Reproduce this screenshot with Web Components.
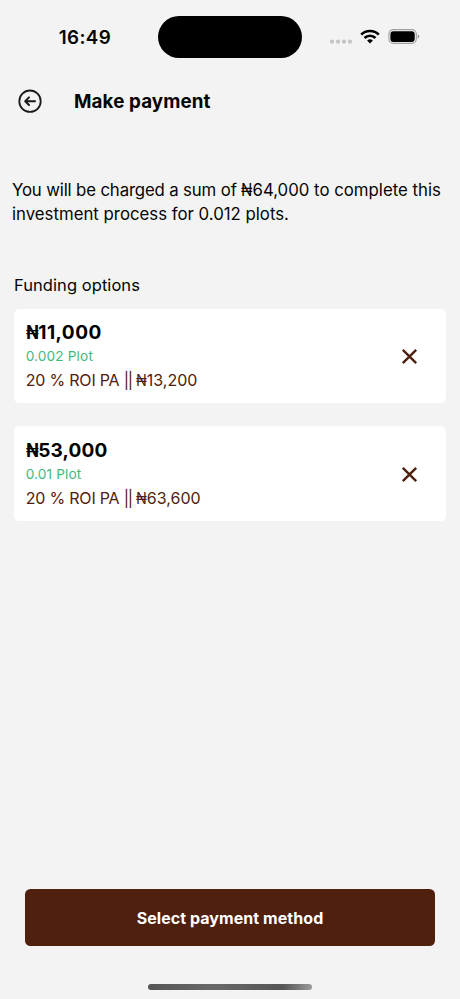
<!DOCTYPE html>
<html lang="en">
<head>
<meta charset="utf-8">
<title>Make payment</title>
<style>
html,body{margin:0;height:100%;background:#f3f3f3}
body{font-family:Inter,"Liberation Sans",sans-serif;color:#050505;overflow:hidden}
</style>
</head>
<body>
<payment-screen></payment-screen>
<script>
const define = (name, html) => customElements.define(name, class extends HTMLElement {
  constructor() {
    super();
    const t = document.createElement('template');
    t.innerHTML = html;
    this.attachShadow({mode: 'open'}).append(t.content.cloneNode(true));
  }
});

define('status-bar', `
<style>
:host{display:grid;grid-template-columns:158px 144px 1fr;height:74px;padding-top:15.5px;box-sizing:border-box;align-items:start}
.time{padding-left:58.7px;font-size:18.8px;font-weight:600;line-height:43px;letter-spacing:.4px;white-space:nowrap}
.island{height:42.3px;border-radius:22px;background:#000}
svg{display:block;width:158px;height:42px}
</style>
<div class="time">16:49</div>
<div class="island"></div>
<svg viewBox="302 15.5 158 42">
  <g fill="#c4c4c4"><circle cx="332" cy="41.2" r="2.1"/><circle cx="338" cy="41.2" r="2.1"/><circle cx="344" cy="41.2" r="2.1"/><circle cx="350" cy="41.2" r="2.1"/></g>
  <g fill="none" stroke="#000" stroke-width="2.7"><path d="M361.2 34.1a12.5 12.5 0 0 1 17.6 0"/><path d="M364.5 37.5a7.8 7.8 0 0 1 11 0"/></g>
  <path d="M367.1 40.1a4.2 4.2 0 0 1 5.8 0L370 43z"/>
  <rect x="388.9" y="29.1" width="27.4" height="13.8" rx="4.4" fill="none" stroke="#a0a0a0" stroke-width="1.1"/>
  <rect x="390.4" y="30.7" width="24.3" height="10.7" rx="3" fill="#000"/>
  <path d="M417.6 33.9q1.7.6 1.7 2.1t-1.7 2.1z" fill="#999"/>
</svg>`);

define('page-header', `
<style>
:host{display:flex;align-items:center;height:54px;padding-left:18px;gap:32px}
svg{width:24px;height:24px;flex:none}
h1{margin:1px 0 0;font-size:18.8px;font-weight:700;line-height:25px;letter-spacing:.1px;white-space:nowrap}
</style>
<svg viewBox="0 0 24 24" fill="none" stroke="#1c1c1c" stroke-width="1.8" stroke-linecap="round" stroke-linejoin="round"><circle cx="12" cy="12.2" r="10.7"/><path d="M17 12.2H7.4M11 8.4 7.2 12.2l3.8 3.8" stroke-width="2"/></svg>
<h1><slot></slot></h1>`);

define('naira-sign', `
<style>
:host{display:inline-block;transform:scaleX(.88);transform-origin:0 50%;margin-right:-.1em;letter-spacing:0}
</style><slot></slot>`);

define('funding-card', `
<style>
:host{display:flex;align-items:center;justify-content:space-between;height:94.7px;box-sizing:border-box;padding:0 28.3px 0 11.7px;border-radius:5.5px;background:#fff}
.copy{display:flex;flex-direction:column;margin-top:2.5px;white-space:nowrap}
.amount{font-size:19px;font-weight:700;color:#000;letter-spacing:.2px;line-height:26px}
.plot{font-size:13.7px;color:#45b97c;letter-spacing:.12px;line-height:20px}
.roi{font-size:16px;color:#50200f;line-height:28px}
svg{width:17px;height:17px;margin-top:1.2px;flex:none}
</style>
<div class="copy"><slot class="amount" name="amount"></slot><slot class="plot" name="plot"></slot><slot class="roi" name="roi"></slot></div>
<svg viewBox="0 0 17 17" fill="none" stroke="#50200f" stroke-width="2.4"><path d="m1.8 1.8 13.4 13.4M15.2 1.8 1.8 15.2"/></svg>`);

define('primary-button', `
<style>
:host{display:block}
button{display:block;width:100%;height:57px;padding:0;border:0;border-radius:5.5px;background:#50200f;color:#fff;font:700 16px/59px Inter,"Liberation Sans",sans-serif;letter-spacing:.06px}
</style>
<button><slot></slot></button>`);

define('payment-screen', `
<style>
:host{display:flex;flex-direction:column;width:460px;height:999px;background:#f3f3f3}
.message{margin:50px 0 0 12px;font-size:16.8px;line-height:24px;white-space:nowrap}
.message .lead{letter-spacing:-.15px}
h2{margin:47px 0 0 14px;font-size:16.5px;font-weight:400;line-height:24px;letter-spacing:.06px}
.options{display:flex;flex-direction:column;gap:23px;margin:11.6px 14px 0}
funding-card>span{display:block;width:max-content}
.wide{letter-spacing:.5px}
.rate{letter-spacing:-.2px}
.bars{letter-spacing:-1.4px}
primary-button{margin:auto 24.7px 0}
.home{flex:none;width:164px;height:5.6px;margin:38px auto 9px;border-radius:3px;background:linear-gradient(90deg,#555 0%,#686868 40%,#555 82%,#999 100%)}
</style>
<status-bar></status-bar>
<page-header>Make payment</page-header>
<p class="message"><span class="lead">You will be charged a sum of </span><naira-sign>₦</naira-sign>64,000 to complete this<br>investment process for 0.012 plots.</p>
<h2>Funding options</h2>
<div class="options">
<funding-card><span slot="amount" class="wide"><naira-sign>₦</naira-sign>11,000</span><span slot="plot">0.002 Plot</span><span slot="roi"><span class="rate">20 % ROI PA </span><span class="bars">||</span> <naira-sign>₦</naira-sign>13,200</span></funding-card>
<funding-card><span slot="amount"><naira-sign>₦</naira-sign>53,000</span><span slot="plot">0.01 Plot</span><span slot="roi"><span class="rate">20 % ROI PA </span><span class="bars">||</span> <naira-sign>₦</naira-sign>63,600</span></funding-card>
</div>
<primary-button>Select payment method</primary-button>
<div class="home"></div>`);
</script>
</body>
</html>
